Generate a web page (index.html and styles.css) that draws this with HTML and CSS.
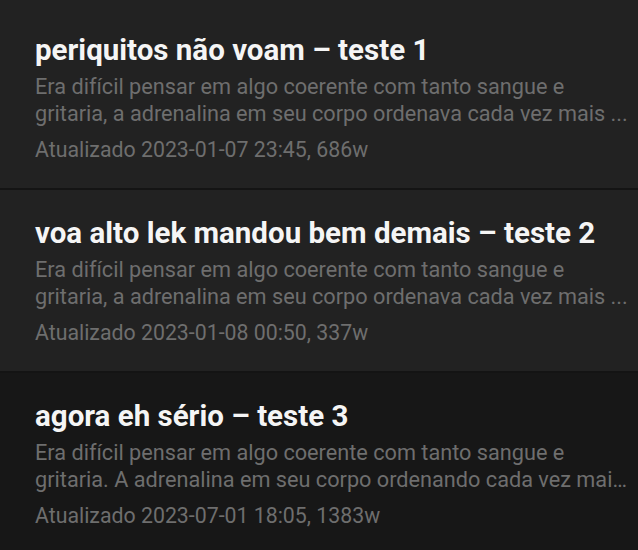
FILE: index.html
```html
<!DOCTYPE html>
<html lang="pt">
<head>
<meta charset="utf-8">
<link rel="stylesheet" href="styles.css">
</head>
<body>
<div class="list">
  <div class="card first">
    <div class="title">periquitos não voam – teste 1</div>
    <div class="excerpt">Era difícil pensar em algo coerente com tanto sangue e gritaria, a adrenalina em seu corpo ordenava cada vez mais ...</div>
    <div class="meta">Atualizado 2023-01-07 23:45, 686w</div>
  </div>
  <div class="card">
    <div class="title">voa alto lek mandou bem demais – teste 2</div>
    <div class="excerpt">Era difícil pensar em algo coerente com tanto sangue e gritaria, a adrenalina em seu corpo ordenava cada vez mais ...</div>
    <div class="meta">Atualizado 2023-01-08 00:50, 337w</div>
  </div>
  <div class="card dark">
    <div class="title">agora eh sério – teste 3</div>
    <div class="excerpt">Era difícil pensar em algo coerente com tanto sangue e gritaria. A adrenalina em seu corpo ordenando cada vez mais forte que ela corresse dali.</div>
    <div class="meta">Atualizado 2023-07-01 18:05, 1383w</div>
  </div>
</div>
</body>
</html>
```
FILE: styles.css
```css
html, body {
  margin: 0;
  padding: 0;
  background: #171717;
}
body {
  font-family: Roboto, "Noto Sans", sans-serif;
  width: 638px;
  height: 550px;
  overflow: hidden;
}
.list {
  display: flex;
  flex-direction: column;
}
.card {
  background: #222222;
  padding: 26px 9px 25px 35px;
  border-bottom: 2px solid #141414;
  display: flex;
  flex-direction: column;
}
.card.first {
  padding-top: 33px;
}
.card.dark {
  background: #171717;
  border-bottom: none;
}
.title {
  color: #f5f5f5;
  font-weight: 700;
  font-size: 29.5px;
  line-height: 34px;
  white-space: nowrap;
}
.excerpt {
  color: #6e6e6e;
  font-size: 21.7px;
  line-height: 27px;
  margin-top: 6px;
  display: -webkit-box;
  -webkit-box-orient: vertical;
  -webkit-line-clamp: 2;
  overflow: hidden;
}
.meta {
  color: #6e6e6e;
  font-size: 21.3px;
  line-height: 27px;
  margin-top: 9px;
}
```
